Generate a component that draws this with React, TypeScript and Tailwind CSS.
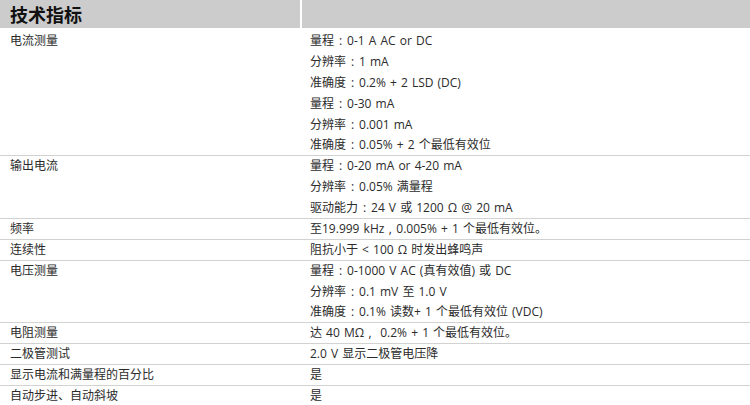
import React from "react";

const rows: { label: string; lines: string[] }[] = [
  {
    label: "电流测量",
    lines: [
      "量程：0-1 A AC or DC",
      "分辨率：1 mA",
      "准确度：0.2% + 2 LSD (DC)",
      "量程：0-30 mA",
      "分辨率：0.001 mA",
      "准确度：0.05% + 2 个最低有效位",
    ],
  },
  {
    label: "输出电流",
    lines: ["量程：0-20 mA or 4-20 mA", "分辨率：0.05% 满量程", "驱动能力：24 V 或 1200 Ω @ 20 mA"],
  },
  { label: "频率", lines: ["至19.999 kHz，0.005% + 1 个最低有效位。"] },
  { label: "连续性", lines: ["阻抗小于 < 100 Ω 时发出蜂鸣声"] },
  {
    label: "电压测量",
    lines: ["量程：0-1000 V AC (真有效值) 或 DC", "分辨率：0.1 mV 至 1.0 V", "准确度：0.1% 读数+ 1 个最低有效位 (VDC)"],
  },
  { label: "电阻测量", lines: ["达 40 MΩ， 0.2% + 1 个最低有效位。"] },
  { label: "二极管测试", lines: ["2.0 V 显示二极管电压降"] },
  { label: "显示电流和满量程的百分比", lines: ["是"] },
  { label: "自动步进、自动斜坡", lines: ["是"] },
];

function Line({ text }: { text: string }) {
  const parts = text.split(/([：，])/);
  return (
    <>
      {parts.map((p, i) =>
        p === "：" ? (
          <span key={i} className="inline-block w-[13px] text-center">
            :
          </span>
        ) : p === "，" ? (
          <span key={i} className="inline-block w-[12px] text-center">
            ,
          </span>
        ) : (
          <React.Fragment key={i}>{p}</React.Fragment>
        )
      )}
    </>
  );
}

export default function App() {
  return (
    <div
      className="w-[750px] h-[405px] overflow-hidden bg-white text-[#2b2b2b] text-[12px]"
      style={{ fontFamily: '"Open Sans", "Noto Sans CJK SC", sans-serif' }}
    >
      <div className="grid grid-cols-[300px_1fr] h-[28px] gap-[2px] bg-white">
        <div className="bg-[#cccccc] flex items-center pl-[10px]">
          <span className="text-[18px] font-bold text-[#111]" style={{ fontFamily: '"Noto Sans CJK SC", sans-serif' }}>
            技术指标
          </span>
        </div>
        <div className="bg-[#cccccc]" />
      </div>
      <div className="pt-[3px]">
        {rows.map((r) => (
          <div key={r.label} className="grid grid-cols-[300px_1fr] shadow-[inset_0_-1px_0_#d2d2d2]">
            <div className="pl-[10px] h-[20.88px] leading-[20.88px]">{r.label}</div>
            <div className="pl-[10px] flex flex-col [word-spacing:1px]">
              {r.lines.map((l, i) => (
                <div key={i} className="h-[20.88px] leading-[20.88px] whitespace-nowrap">
                  <Line text={l} />
                </div>
              ))}
            </div>
          </div>
        ))}
      </div>
    </div>
  );
}
